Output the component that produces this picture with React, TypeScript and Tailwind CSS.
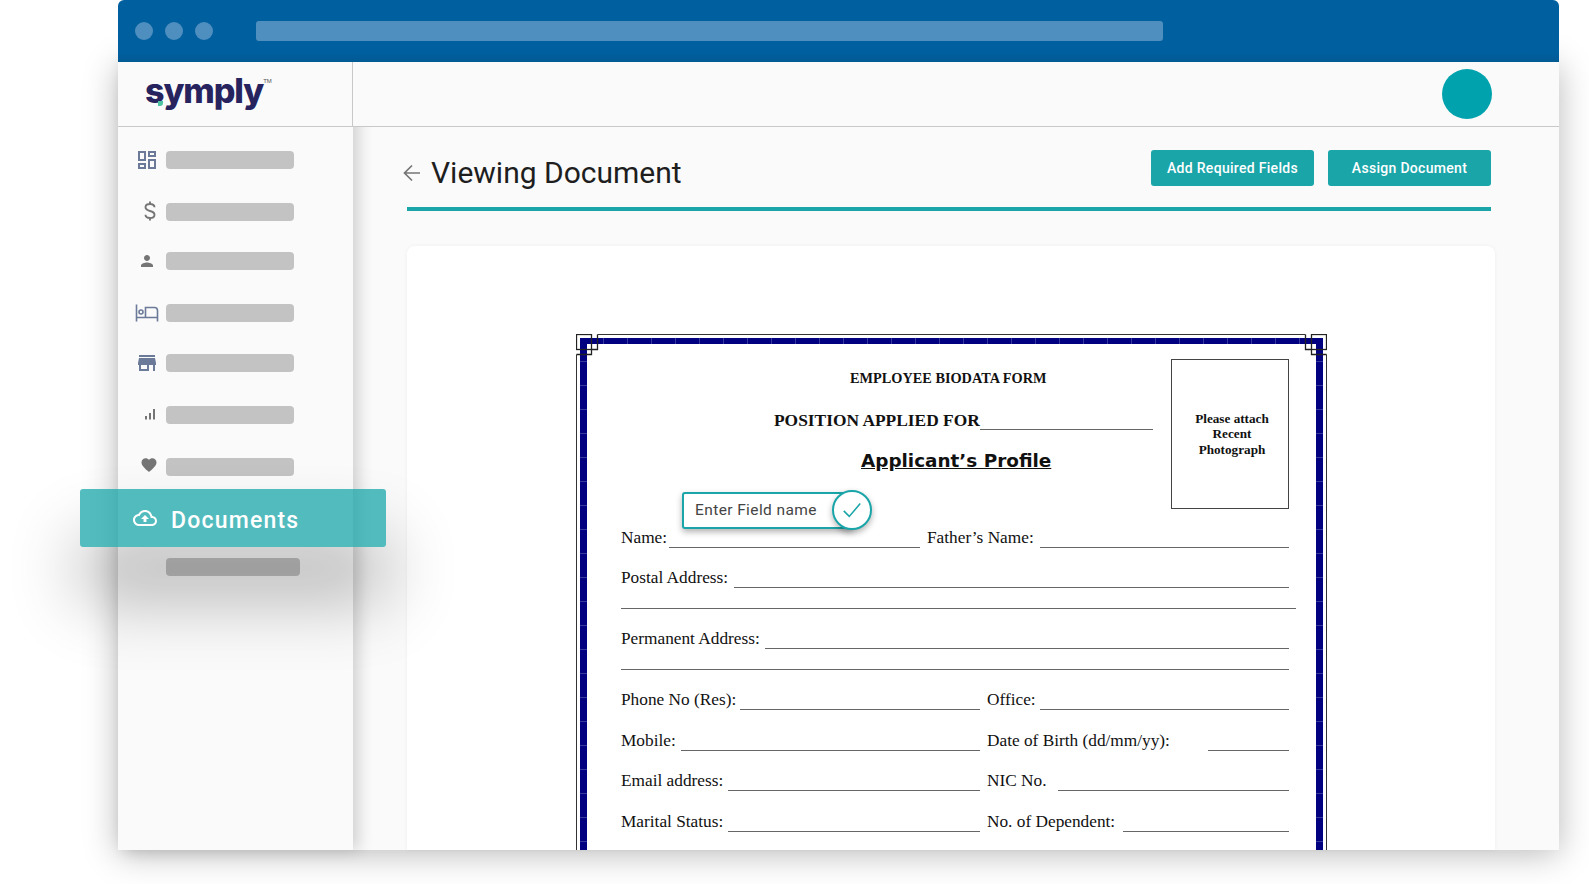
import type { ReactNode } from "react";

const serif = "font-['Liberation_Serif',serif]";

const navItems: { className: string; icon: ReactNode }[] = [
  {
    className: "mt-[24px]",
    icon: (
      <svg viewBox="0 0 24 24" className="h-6 w-6 fill-[#6b7a99]">
        <path d="M19 5v2h-4V5h4M9 5v6H5V5h4m10 8v6h-4v-6h4M9 17v2H5v-2h4M21 3h-8v6h8V3zM11 3H3v10h8V3zm10 8h-8v10h8V11zm-10 4H3v6h8v-6z" />
      </svg>
    ),
  },
  {
    className: "mt-[34px]",
    icon: (
      <svg viewBox="0 0 24 24" className="mt-[-3px] ml-[3px] h-6 w-6 shrink-0 fill-none stroke-[#757575] stroke-[1.9]">
        <path d="M16.5 8.2c0-1.9-1.8-3.2-4.5-3.2S7.5 6.3 7.5 8.3c0 2 1.8 3 4.5 3.7s4.5 1.7 4.5 3.7-1.8 3.3-4.5 3.3-4.5-1.3-4.5-3.2M12 2.6V5M12 19v2.4" />
      </svg>
    ),
  },
  {
    className: "mt-[31px]",
    icon: (
      <svg viewBox="0 0 24 24" className="ml-[3px] h-[18px] w-[18px] fill-[#757575]">
        <path d="M12 12c2.21 0 4-1.79 4-4s-1.79-4-4-4-4 1.79-4 4 1.79 4 4 4zm0 2c-2.67 0-8 1.34-8 4v2h16v-2c0-2.66-5.33-4-8-4z" />
      </svg>
    ),
  },
  {
    className: "mt-[34px]",
    icon: (
      <svg viewBox="0 0 24 24" className="h-6 w-6 fill-none stroke-[#6b7a99] stroke-[1.6]">
        <path d="M1.5 3.5v17M1.5 16.5h21M22.5 20.5v-11a3 3 0 0 0-3-3H10.5v10" />
        <circle cx="6" cy="11" r="2" />
      </svg>
    ),
  },
  {
    className: "mt-[32px]",
    icon: (
      <svg viewBox="0 0 24 24" className="h-6 w-6 fill-[#6b7a99]">
        <path d="M20 4H4v2h16V4zm1 10v-2l-1-5H4l-1 5v2h1v6h10v-6h4v6h2v-6h1zm-9 4H6v-4h6v4z" />
      </svg>
    ),
  },
  {
    className: "mt-[34px]",
    icon: (
      <svg viewBox="0 0 12 12" className="mt-[-2px] ml-[9px] h-3 w-3 fill-[#757575]">
        <rect x="1" y="8" width="2" height="3.5" />
        <rect x="5" y="5" width="2" height="6.5" />
        <rect x="9" y="1" width="2" height="10.5" />
      </svg>
    ),
  },
  {
    className: "mt-[34px]",
    icon: (
      <svg viewBox="0 0 24 24" className="mt-[-4px] ml-[5px] h-[18px] w-[18px] fill-[#757575]">
        <path d="M12 21.35l-1.45-1.32C5.4 15.36 2 12.28 2 8.5 2 5.42 4.42 3 7.5 3c1.74 0 3.41.81 4.5 2.09C13.09 3.81 14.76 3 16.5 3 19.58 3 22 5.42 22 8.5c0 3.78-3.4 6.86-8.55 11.54L12 21.35z" />
      </svg>
    ),
  },
];

function Field({
  label,
  className,
  labelClass,
}: {
  label: string;
  className: string;
  labelClass: string;
}) {
  return (
    <div className={`flex items-end ${className}`}>
      <span className={`shrink-0 whitespace-nowrap leading-[20px] ${labelClass}`}>{label}</span>
      <span className="flex-1 border-b border-[#666]" />
    </div>
  );
}

function CornerMark({ className }: { className: string }) {
  return (
    <svg viewBox="0 0 24 24" className={`absolute h-6 w-6 fill-none stroke-[#222] stroke-[1.3] ${className}`}>
      <path d="M15.5 0h6v1h-6zM0 15.5h1v5H0z" className="fill-white stroke-none" />
      <rect x="0.5" y="0.5" width="15" height="15" />
      <path d="M21.5 0.5v15h-6v5H0.5" />
    </svg>
  );
}

function Sidebar() {
  return (
    <aside className="relative z-10 flex w-[235px] shrink-0 flex-col bg-[#fafafa] shadow-[6px_0_14px_rgba(0,0,0,0.16)]">
      <div className="relative flex h-[65px] items-start border-r border-b border-[#c8c8c8] pl-[27px]">
        <span className="mt-[6px] font-['Inter',sans-serif] text-[34px] leading-[46px] font-extrabold tracking-[-1.1px] text-[#26235f]">
          symply
        </span>
        <span className="mt-[15px] font-['Liberation_Sans',sans-serif] text-[6px] leading-[8px] text-[#555]">TM</span>
        <span className="absolute top-[39px] left-[40px] h-[5px] w-[5px] rounded-br-[3px] bg-[#4fc3a1]" />
      </div>

      {navItems.map((item, i) => (
        <div key={i} className={`flex h-[18px] items-center pl-[17px] ${item.className}`}>
          <span className="flex w-6 shrink-0 items-center">{item.icon}</span>
          <span className="ml-[7px] h-[18px] w-[128px] rounded-[4px] bg-[#c3c3c3]" />
        </div>
      ))}

      <div className="relative z-10 mt-[13px] ml-[-38px] flex h-[58px] w-[306px] items-center rounded-[3px] bg-[#1aa5a9]/75 pl-[53px] shadow-[0_50px_70px_rgba(0,0,0,0.3)]">
        <svg viewBox="0 0 24 24" className="h-6 w-6 fill-white">
          <path d="M19.35 10.04C18.67 6.59 15.64 4 12 4 9.11 4 6.6 5.64 5.35 8.04 2.34 8.36 0 10.91 0 14c0 3.31 2.69 6 6 6h13c2.76 0 5-2.24 5-5 0-2.64-2.05-4.78-4.65-4.96zM19 18H6c-2.21 0-4-1.79-4-4 0-2.05 1.53-3.76 3.56-3.97l1.07-.11.5-.95C8.08 7.14 9.94 6 12 6c2.62 0 4.88 1.86 5.39 4.43l.3 1.5 1.53.11c1.56.1 2.78 1.41 2.78 2.96 0 1.65-1.35 3-3 3zM8 13h2.55v3h2.9v-3H16l-4-4z" />
        </svg>
        <span className="mt-[6px] ml-[14px] font-['Roboto',sans-serif] text-[23px] font-medium tracking-[1.2px] text-white">
          Documents
        </span>
      </div>

      <div className="mt-[11px] ml-[48px] h-[18px] w-[134px] rounded-[4px] bg-[#c3c3c3]" />
    </aside>
  );
}

function BiodataForm() {
  return (
    <div className="relative mt-[88px] ml-[169px] w-[751px] border-x border-t border-[#333] px-[3px] pt-[3px]">
      <div className="bg-[#000080] bg-[repeating-linear-gradient(90deg,transparent_0,transparent_23px,#3a3a9e_23px,#3a3a9e_24px),repeating-linear-gradient(180deg,transparent_0,transparent_23px,#3a3a9e_23px,#3a3a9e_24px)] px-[7px] pt-[6px]">
        <div className={`relative bg-white pr-[27px] pb-[40px] pl-[34px] text-[17.3px] text-[#111] ${serif}`}>
          <div className="flex pt-[15px]">
            <div className="w-[550px] font-bold">
              <p className="mt-[9px] ml-[229px] text-[14.3px] leading-[20px]">EMPLOYEE BIODATA FORM</p>
              <div className="mt-[20px] ml-[153px] flex items-end">
                <span className="text-[17.4px] leading-[24px]">POSITION APPLIED FOR</span>
                <span className="mb-[2px] w-[173px] border-b border-[#666]" />
              </div>
              <p className="mt-[16px] ml-[240px] font-['DejaVu_Sans',sans-serif] text-[18.4px] leading-[26px] underline">
                Applicant’s Profile
              </p>
            </div>
            <div className="flex h-[150px] w-[118px] items-center justify-center border border-[#444] pl-[4px] text-center text-[13.2px] leading-[15.5px] font-bold">
              <p>
                Please attach
                <br />
                Recent
                <br />
                Photograph
              </p>
            </div>
          </div>

          <div className="absolute top-[146px] left-[95px] flex h-[40px] w-[190px] items-center">
            <div className="flex h-[37px] w-[171px] items-center rounded-[3px] border-2 border-[#1aa5a9] bg-white pt-[2px] pl-[11px] font-['Roboto',sans-serif] text-[15.5px] tracking-[0.4px] text-[#444] shadow-[0_3px_6px_rgba(0,0,0,0.3)]">
              Enter Field name
            </div>
            <div className="ml-[-21px] flex h-10 w-10 items-center justify-center rounded-full border-2 border-[#1aa5a9] bg-white shadow-[0_3px_6px_rgba(0,0,0,0.3)]">
              <svg viewBox="0 0 24 24" className="h-[22px] w-[22px] fill-none stroke-[#1aa5a9] stroke-[1.7]">
                <path d="M3 13l6 6L21 5" />
              </svg>
            </div>
          </div>

          <div className="flex h-[39px]">
            <Field label="Name:" className="w-[299px]" labelClass="w-[48px]" />
            <Field label="Father’s Name:" className="ml-[7px] flex-1" labelClass="w-[113px]" />
          </div>
          <div className="flex h-[40px]">
            <Field label="Postal Address:" className="flex-1" labelClass="w-[113px]" />
          </div>
          <div className="h-[21px] w-[675px] border-b border-[#666]" />
          <div className="flex h-[40px]">
            <Field label="Permanent Address:" className="flex-1" labelClass="w-[144px]" />
          </div>
          <div className="h-[21px] border-b border-[#666]" />
          <div className="flex h-[40px]">
            <Field label="Phone No (Res):" className="w-[359px]" labelClass="w-[119px]" />
            <Field label="Office:" className="ml-[7px] flex-1" labelClass="w-[53px]" />
          </div>
          <div className="flex h-[41px]">
            <Field label="Mobile:" className="w-[359px]" labelClass="w-[60px]" />
            <Field label="Date of Birth (dd/mm/yy):" className="ml-[7px] flex-1" labelClass="w-[221px]" />
          </div>
          <div className="flex h-[40px]">
            <Field label="Email address:" className="w-[359px]" labelClass="w-[107px]" />
            <Field label="NIC No." className="ml-[7px] flex-1" labelClass="w-[71px]" />
          </div>
          <div className="flex h-[41px]">
            <Field label="Marital Status:" className="w-[359px]" labelClass="w-[107px]" />
            <Field label="No. of Dependent:" className="ml-[7px] flex-1" labelClass="w-[136px]" />
          </div>
        </div>
      </div>
      <CornerMark className="top-[-1px] left-[-1px]" />
      <CornerMark className="top-[-1px] right-[-1px] scale-x-[-1]" />
    </div>
  );
}

export default function App() {
  return (
    <div className="h-[884px] w-full overflow-hidden bg-white pl-[118px] font-['Roboto',sans-serif]">
      <div className="flex h-[850px] w-[1441px] flex-col">
        <header className="relative z-20 flex h-[62px] shrink-0 items-center rounded-t-[6px] bg-gradient-to-b from-[#005f9e] from-85% to-[#015a93] pl-[17px]">
          <span className="h-[18px] w-[18px] rounded-full bg-[#4f8fbf]" />
          <span className="ml-3 h-[18px] w-[18px] rounded-full bg-[#4f8fbf]" />
          <span className="ml-3 h-[18px] w-[18px] rounded-full bg-[#4f8fbf]" />
          <span className="ml-[43px] h-5 w-[907px] rounded-[3px] bg-[#4f8fbf]" />
        </header>

        <div className="flex min-h-0 flex-1 shadow-[0_4px_32px_rgba(0,0,0,0.28)]">
          <Sidebar />

          <main className="flex min-w-0 flex-1 flex-col bg-[#fafafa]">
            <div className="relative z-20 flex h-[65px] shrink-0 items-start justify-end border-b border-[#c8c8c8] bg-[#fafafa] pt-[7px] pr-[67px]">
              <span className="h-[50px] w-[50px] rounded-full bg-[#00a3ad]" />
            </div>

            <div className="flex min-h-0 flex-1 flex-col pl-[54px]">
              <div className="mt-[23px] flex h-[36px] w-[1084px] items-start justify-between">
                <div className="flex items-center">
                  <svg viewBox="0 0 24 24" className="ml-[-7px] h-6 w-6 fill-none stroke-[#757575] stroke-[1.7]">
                    <path d="M20 12H5M12 19.5L4.5 12 12 4.5" />
                  </svg>
                  <h1 className="ml-[7px] text-[30px] leading-[46px] text-[#1e1e1e]">Viewing Document</h1>
                </div>
                <div className="flex gap-[14px]">
                  <button className="h-[36px] w-[163px] rounded-[3px] bg-[#1aa5a9] text-[14px] font-medium tracking-[0.3px] text-white">
                    Add Required Fields
                  </button>
                  <button className="h-[36px] w-[163px] rounded-[3px] bg-[#1aa5a9] text-[14px] font-medium tracking-[0.3px] text-white">
                    Assign Document
                  </button>
                </div>
              </div>
              <div className="mt-[21px] h-1 w-[1084px] shrink-0 bg-[#1aa5a9]" />
              <div className="mt-[35px] min-h-0 w-[1088px] flex-1 overflow-hidden rounded-t-[8px] bg-white shadow-[0_0_4px_rgba(0,0,0,0.05)]">
                <BiodataForm />
              </div>
            </div>
          </main>
        </div>
      </div>
    </div>
  );
}
